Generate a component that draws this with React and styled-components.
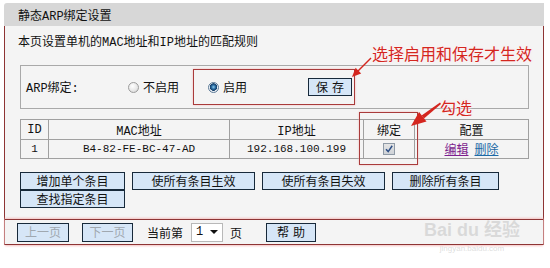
import React from 'react'
import styled, { createGlobalStyle } from 'styled-components'

const GlobalStyle = createGlobalStyle`
  body {
    margin: 0;
    background: #fff;
    font-family: "Liberation Mono", "Noto Sans CJK SC", monospace;
    font-size: 12px;
    color: #111;
  }
`;

const Page = styled.div`
  position: relative;
  width: 550px;
  height: 268px;
  padding: 3px 0 0 4px;
  box-sizing: border-box;
  overflow: hidden;
`;

const Frame = styled.div`
  width: 540px;
`;

const TitleBar = styled.div`
  height: 23px;
  background: #d7d7d7;
  border-radius: 3px 0 0 0;
  display: flex;
  align-items: center;
  padding-left: 14px;
`;

const Panel = styled.div`
  background: #f4f4f4;
  border-left: 1px solid #8e3434;
  border-right: 1px solid #8e3434;
`;

const Body = styled.div`
  padding: 9px 14px 11px 15px;
`;

const Desc = styled.div`
  line-height: 16px;
  margin-left: -2px;
`;

const ArpBox = styled.div`
  margin-top: 14px;
  height: 42px;
  border: 1px solid #a9a9a9;
  display: flex;
  align-items: center;
  padding-left: 5px;
`;

const ArpLabel = styled.span`
  width: 102px;
`;

const RadioLabel = styled.label`
  display: flex;
  align-items: center;
  gap: 4px;
`;

const Radio = styled.span`
  width: 11px;
  height: 11px;
  box-sizing: border-box;
  border-radius: 50%;
  border: 1px solid ${({ checked }) => (checked ? '#5d7b98' : '#9c9c9c')};
  background: ${({ checked }) =>
    checked
      ? 'radial-gradient(circle at 50% 45%, #8fd0f0 0, #2a6aa0 2px, #123c66 3.5px, #e9eef3 4px)'
      : 'radial-gradient(circle at 40% 35%, #ffffff 0, #e6e6e6 60%, #cfcfcf 100%)'};
`;

const Highlight = styled.div`
  margin-left: 14px;
  width: 162px;
  height: 36px;
  box-sizing: border-box;
  border: 1px solid #a93b3b;
  box-shadow: 0 0 2px #f2b8b8;
  display: flex;
  align-items: center;
  justify-content: space-between;
  padding: 0 2px 0 14px;
`;

const Button = styled.button`
  width: ${({ w }) => w}px;
  height: ${({ h }) => h || 18}px;
  box-sizing: border-box;
  padding: 0;
  background: #d6e6f7;
  border: 1px solid #17293a;
  font-family: "Noto Sans CJK SC", sans-serif;
  font-size: 12px;
  letter-spacing: ${({ spaced }) => (spaced ? '4px' : '0')};
  text-indent: ${({ spaced }) => (spaced ? '4px' : '0')};
  color: ${({ disabled }) => (disabled ? '#a0a8b0' : '#111')};
  line-height: 1;
`;

const Table = styled.table`
  margin-top: 10px;
  width: 509px;
  border-collapse: collapse;
  table-layout: fixed;
`;

const Th = styled.th`
  height: 19px;
  padding: 0;
  border: 1px solid #a0a0a0;
  font-weight: normal;
  text-align: center;
`;

const Td = styled.td`
  height: 17px;
  padding: 0;
  border: 1px solid #a0a0a0;
  text-align: center;
  font-size: 11px;
`;

const Check = styled.span`
  display: inline-flex;
  width: 12px;
  height: 12px;
  box-sizing: border-box;
  border: 1px solid #8f9aa6;
  background: linear-gradient(#e4e4e4, #cfd3d8);
  vertical-align: middle;
`;

const Link = styled.a`
  color: ${({ visited }) => (visited ? '#7d1f8e' : '#1d6aa6')};
  text-decoration: underline;
  margin: 0 3px;
  font-size: 12px;
`;

const ButtonRows = styled.div`
  margin-top: 13px;
  display: flex;
  flex-direction: column;
`;

const ButtonRow = styled.div`
  display: flex;
  gap: 7px;
`;

const Footer = styled.div`
  height: 24px;
  border-top: 1px solid #8e3434;
  border-bottom: 1px solid #8e3434;
  box-shadow: 0 1px 2px #f3c2c2, 0 -1px 2px #f3c2c2;
  display: flex;
  align-items: center;
  padding-left: 12px;
`;

const PagerText = styled.span`
  font-family: "Noto Sans CJK SC", sans-serif;
  font-size: 12px;
  margin: ${({ m }) => m};
`;

const Select = styled.div`
  width: 32px;
  height: 19px;
  box-sizing: border-box;
  background: #fff;
  border: 1px solid #b8b8b8;
  display: flex;
  align-items: center;
  justify-content: space-between;
  padding: 0 4px 0 4px;
  font-size: 12px;
  &::after {
    content: '';
    border-left: 4px solid transparent;
    border-right: 4px solid transparent;
    border-top: 4px solid #111;
  }
`;

const Note = styled.div`
  position: absolute;
  left: ${({ x }) => x}px;
  top: ${({ y }) => y}px;
  font-family: "Noto Sans CJK SC", sans-serif;
  font-size: 16px;
  line-height: 1;
  color: #d4261f;
  text-shadow: 0 0 2px #fff, 0 0 3px #fde3e3;
`;

const Box = styled.div`
  position: absolute;
  left: 359px;
  top: 112px;
  width: 59px;
  height: 53px;
  box-sizing: border-box;
  border: 1px solid #a93b3b;
  box-shadow: 0 0 2px #f2b8b8;
`;

const Arrows = styled.svg`
  position: absolute;
  left: 0;
  top: 0;
  pointer-events: none;
`;

const Watermark = styled.div`
  position: absolute;
  left: 420px;
  top: 221px;
  width: 104px;
  color: rgba(200, 200, 200, 0.6);
  font-family: "Liberation Sans", "Noto Sans CJK SC", sans-serif;
  text-align: center;
  line-height: 1;
  span { display: block; white-space: nowrap; }
`;

export default function App() {
  return (
    <>
      <GlobalStyle />
      <Page>
        <Frame>
          <TitleBar>静态ARP绑定设置</TitleBar>
          <Panel>
            <Body>
              <Desc>本页设置单机的MAC地址和IP地址的匹配规则</Desc>
              <ArpBox>
                <ArpLabel>ARP绑定:</ArpLabel>
                <RadioLabel><Radio />不启用</RadioLabel>
                <Highlight>
                  <RadioLabel><Radio checked />启用</RadioLabel>
                  <Button w={44} spaced>保存</Button>
                </Highlight>
              </ArpBox>
              <Table>
                <colgroup>
                  <col style={{ width: 28 }} />
                  <col style={{ width: 181 }} />
                  <col style={{ width: 134 }} />
                  <col style={{ width: 51 }} />
                  <col />
                </colgroup>
                <thead>
                  <tr>
                    <Th>ID</Th>
                    <Th>MAC地址</Th>
                    <Th>IP地址</Th>
                    <Th>绑定</Th>
                    <Th>配置</Th>
                  </tr>
                </thead>
                <tbody>
                  <tr>
                    <Td>1</Td>
                    <Td>B4-82-FE-BC-47-AD</Td>
                    <Td>192.168.100.199</Td>
                    <Td>
                      <Check>
                        <svg width="10" height="10" viewBox="0 0 10 10">
                          <path d="M2 5.2 L4.2 7.6 L8.2 1.8" fill="none" stroke="#2d4f86" strokeWidth="1.5" />
                        </svg>
                      </Check>
                    </Td>
                    <Td>
                      <Link visited href="#">编辑</Link>
                      <Link href="#">删除</Link>
                    </Td>
                  </tr>
                </tbody>
              </Table>
              <ButtonRows>
                <ButtonRow>
                  <Button w={105}>增加单个条目</Button>
                  <Button w={123}>使所有条目生效</Button>
                  <Button w={123}>使所有条目失效</Button>
                  <Button w={107}>删除所有条目</Button>
                </ButtonRow>
                <ButtonRow>
                  <Button w={105}>查找指定条目</Button>
                </ButtonRow>
              </ButtonRows>
            </Body>
            <Footer>
              <Button w={52} h={19} disabled>上一页</Button>
              <Button w={51} h={19} disabled style={{ marginLeft: 13 }}>下一页</Button>
              <PagerText m="0 8px 0 14px">当前第</PagerText>
              <Select>1</Select>
              <PagerText m="0 24px 0 7px">页</PagerText>
              <Button w={50} h={19} spaced>帮助</Button>
            </Footer>
          </Panel>
        </Frame>

        <Note x={372} y={45}>选择启用和保存才生效</Note>
        <Note x={440} y={99}>勾选</Note>
        <Box />
        <Arrows width="550" height="268" viewBox="0 0 550 268">
          <line x1="371" y1="58" x2="358" y2="71" stroke="#d4261f" strokeWidth="1.5" />
          <polygon points="352,77 361.2,73.4 355.6,67.8" fill="#d4261f" />
          <polygon points="440,102.5 441,104 424,118.5 421.6,115.5" fill="#d4261f" />
          <polygon points="411,126 426.5,121.4 419.1,112" fill="#d4261f" />
        </Arrows>
        <Watermark>
          <span style={{ fontSize: 18, fontWeight: 700 }}>Bai du 经验</span>
          <span style={{ fontSize: 8, marginTop: 6 }}>jingyan.baidu.com</span>
        </Watermark>
      </Page>
    </>
  )
}
